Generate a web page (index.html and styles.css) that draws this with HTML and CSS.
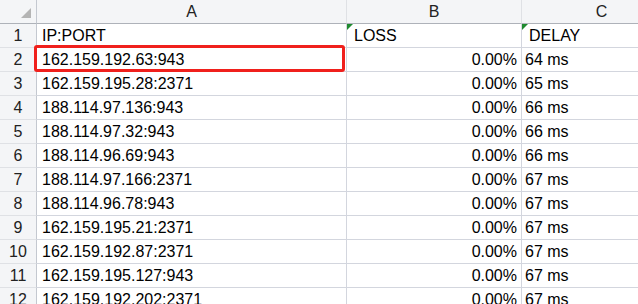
FILE: index.html
```html
<!DOCTYPE html>
<html>
<head>
<meta charset="utf-8">
<link rel="stylesheet" href="styles.css">
</head>
<body>
<div class="sheet">
  <div class="corner hdr"><span class="tri"></span></div>
  <div class="hdr colh">A</div>
  <div class="hdr colh">B</div>
  <div class="hdr colh">C</div>

  <div class="rowh">1</div>
  <div class="cell a">IP:PORT</div>
  <div class="cell b head"><span class="flag"></span>LOSS</div>
  <div class="cell c head"><span class="flag"></span>DELAY</div>

  <div class="rowh">2</div>
  <div class="cell a sel">162.159.192.63:943<span class="redbox"></span></div>
  <div class="cell b num">0.00%</div>
  <div class="cell c">64 ms</div>

  <div class="rowh">3</div>
  <div class="cell a">162.159.195.28:2371</div>
  <div class="cell b num">0.00%</div>
  <div class="cell c">65 ms</div>

  <div class="rowh">4</div>
  <div class="cell a">188.114.97.136:943</div>
  <div class="cell b num">0.00%</div>
  <div class="cell c">66 ms</div>

  <div class="rowh">5</div>
  <div class="cell a">188.114.97.32:943</div>
  <div class="cell b num">0.00%</div>
  <div class="cell c">66 ms</div>

  <div class="rowh">6</div>
  <div class="cell a">188.114.96.69:943</div>
  <div class="cell b num">0.00%</div>
  <div class="cell c">66 ms</div>

  <div class="rowh">7</div>
  <div class="cell a">188.114.97.166:2371</div>
  <div class="cell b num">0.00%</div>
  <div class="cell c">67 ms</div>

  <div class="rowh">8</div>
  <div class="cell a">188.114.96.78:943</div>
  <div class="cell b num">0.00%</div>
  <div class="cell c">67 ms</div>

  <div class="rowh">9</div>
  <div class="cell a">162.159.195.21:2371</div>
  <div class="cell b num">0.00%</div>
  <div class="cell c">67 ms</div>

  <div class="rowh">10</div>
  <div class="cell a">162.159.192.87:2371</div>
  <div class="cell b num">0.00%</div>
  <div class="cell c">67 ms</div>

  <div class="rowh">11</div>
  <div class="cell a">162.159.195.127:943</div>
  <div class="cell b num">0.00%</div>
  <div class="cell c">67 ms</div>

  <div class="rowh">12</div>
  <div class="cell a">162.159.192.202:2371</div>
  <div class="cell b num">0.00%</div>
  <div class="cell c">67 ms</div>
</div>
</body>
</html>
```

FILE: styles.css
```css
html, body {
  margin: 0;
  padding: 0;
  background: #ffffff;
  overflow: hidden;
}
body {
  width: 638px;
  height: 304px;
  font-family: "Liberation Sans", Arial, sans-serif;
  font-size: 16px;
  color: #000000;
}
.sheet {
  display: grid;
  grid-template-columns: 37px 310px 175px 160px;
  grid-template-rows: 24px;
  grid-auto-rows: 24px;
}
.sheet > div {
  box-sizing: border-box;
  border-right: 1px solid #d3d6de;
  border-bottom: 1px solid #d3d6de;
  display: flex;
  align-items: center;
  white-space: nowrap;
  position: relative;
}
.hdr {
  background: #f4f5f7;
  justify-content: center;
  color: #222222;
  border-bottom-color: #aeb2b9 !important;
}
.corner {
  border-right-color: #c4c8d0 !important;
}
.tri {
  position: absolute;
  left: 21px;
  top: 8px;
  width: 0;
  height: 0;
  border-left: 10px solid transparent;
  border-bottom: 10px solid #b4b4b4;
}
.colh {
  border-right-color: #dfe1e5 !important;
}
.rowh {
  background: #f4f5f7;
  justify-content: center;
  color: #222222;
  border-right-color: #c4c8d0 !important;
  border-bottom-color: #dfe1e5 !important;
}
.cell {
  padding-left: 4px;
}
.cell.a {
  padding-left: 5px;
}
.cell.c {
  padding-left: 3px;
}
.cell.head {
  padding-left: 7px;
}
.num {
  justify-content: flex-end;
  padding-left: 0;
  padding-right: 4px;
}
.flag {
  position: absolute;
  left: 0;
  top: 0;
  width: 0;
  height: 0;
  border-top: 6px solid #1f8a2f;
  border-right: 6px solid transparent;
}
.redbox {
  position: absolute;
  left: -3px;
  top: -3px;
  width: 311px;
  height: 27px;
  box-sizing: border-box;
  border: 3px solid #f0201c;
  border-radius: 3px;
}
```
